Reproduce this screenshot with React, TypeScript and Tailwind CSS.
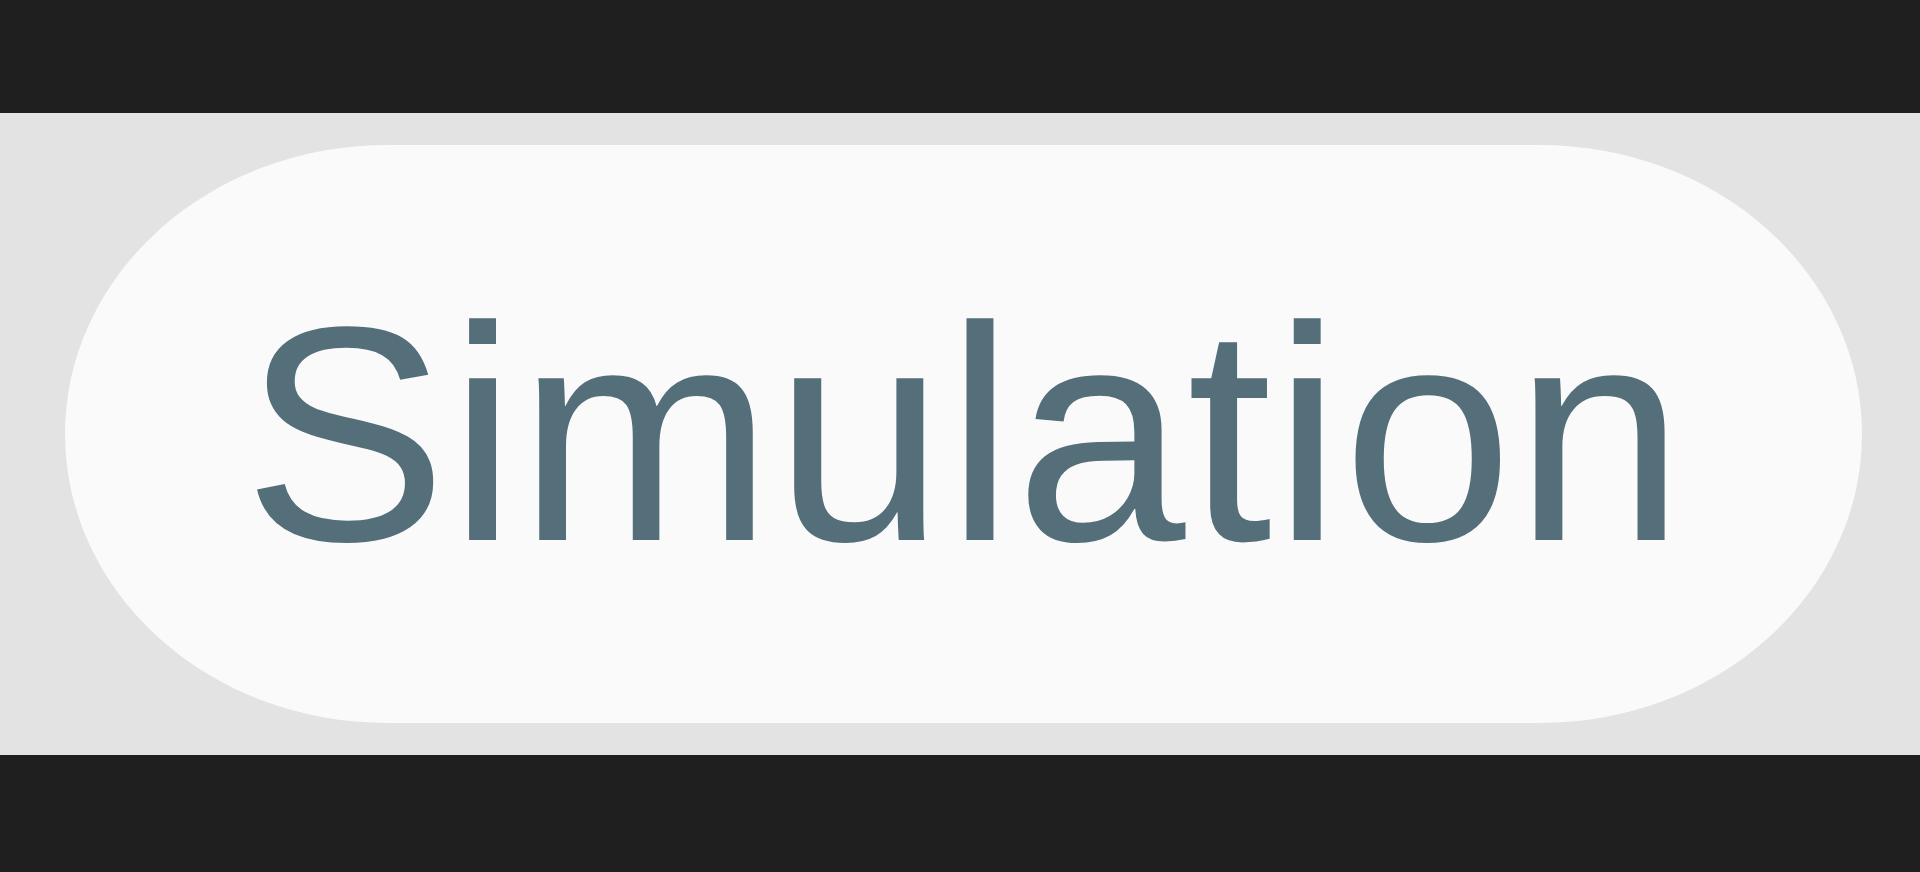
export default function App() {
  return (
    <div className="flex h-[872px] w-full flex-col bg-[#1f1f1f]">
      <div className="h-[113px] shrink-0" />
      <section className="flex h-[642px] shrink-0 items-stretch bg-[#e3e3e3] pl-[65px] pr-[58px] pt-[32px] pb-[32px]">
        <div className="flex flex-1 items-center justify-center rounded-[322px/289px] bg-[#fafafa]">
          <span
            className="pl-[2px] text-[306px] leading-none tracking-[1.4px] text-[#546e7a]"
            style={{ fontFamily: '"Liberation Sans", Arial, sans-serif' }}
          >
            Simulation
          </span>
        </div>
      </section>
      <div className="flex-1" />
    </div>
  );
}
